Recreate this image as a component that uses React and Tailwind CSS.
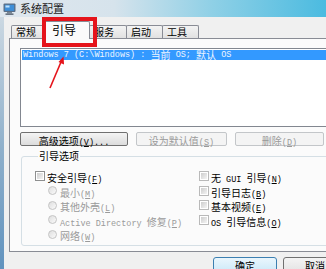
import React from "react";

// 中文与西文分开排版：中文用 Noto CJK，西文用等宽（模拟宋体的半角）
const CJK = /([\u2e80-\u9fff\u3000-\u303f\uff00-\uffef]+)/;

function T({ s }) {
  return s
    .split(CJK)
    .filter(Boolean)
    .map((p, i) =>
      CJK.test(p) ? (
        <span key={i} className="font-['Noto_Sans_CJK_SC',sans-serif] text-[10px]">
          {p}
        </span>
      ) : (
        <span key={i} className="font-['Liberation_Mono',monospace] text-[8.5px] whitespace-pre">
          {p}
        </span>
      )
    );
}

function Lbl({ s, k, tail = "" }) {
  return (
    <span className="leading-none whitespace-nowrap">
      <T s={s} />
      <span className="font-['Liberation_Mono',monospace] text-[8.5px]">
        (<u>{k}</u>){tail}
      </span>
    </span>
  );
}

function Box({ light }) {
  return (
    <span
      className={
        "w-[10px] h-[10px] border p-[1px] bg-white shrink-0 " +
        (light ? "border-[#b9b9b9]" : "border-[#8e8f8f]")
      }
    >
      <span className="block w-full h-full bg-gradient-to-br from-[#cdcdcd] to-[#f4f4f4]" />
    </span>
  );
}

function Radio() {
  return (
    <span className="w-[9px] h-[9px] rounded-full border border-[#c4c4c4] bg-gradient-to-br from-[#dedede] to-[#fbfbfb] shrink-0" />
  );
}

const tabs = [
  { name: "常规", w: "w-[33px]" },
  { name: "引导", w: "w-[46px]", on: true },
  { name: "服务", w: "w-[38px]" },
  { name: "启动", w: "w-[37px]" },
  { name: "工具", w: "w-[37px]" },
];

export default function App() {
  return (
    <div className="w-[326px] h-[269px] overflow-hidden relative bg-[#f0f0f0] flex flex-col text-black">
      {/* 标题栏 */}
      <div className="h-[17px] shrink-0 flex items-center gap-[4px] pl-[3px] bg-[linear-gradient(90deg,#dfe7ee_0%,#d6e3ec_35%,#8fd0e6_65%,#4bbbe0_100%)]">
        <svg width="13" height="12" viewBox="0 0 13 12">
          <rect x="0.5" y="0.5" width="12" height="8.5" rx="1" fill="#5a6e86" />
          <rect x="1.8" y="1.8" width="9.4" height="6" fill="#3f8fd8" />
          <rect x="2.5" y="2.5" width="4" height="2" fill="#bfe4ff" />
          <rect x="4" y="9" width="5" height="1.5" fill="#7b8794" />
          <rect x="2.5" y="10.5" width="8" height="1.3" fill="#4d5968" />
        </svg>
        <span className="font-['Noto_Sans_CJK_SC',sans-serif] text-[11px] leading-none text-[#1b1b1b]">
          系统配置
        </span>
      </div>

      <div className="flex flex-1">
        <div className="w-[4px] shrink-0 bg-gradient-to-b from-[#cbd8e2] via-[#8fb0cb] to-[#5d90bd]" />
        <div className="flex-1 pl-[5px] pt-[5px] flex flex-col">
          {/* 选项卡 */}
          <div className="h-[16px] flex items-end pl-[2px] relative z-10">
            {tabs.map((t) =>
              t.on ? (
                <div
                  key={t.name}
                  className={
                    t.w +
                    " h-[18px] -mb-[1px] border border-b-0 border-[#898c95] bg-[#fbfbfb] rounded-t-[2px] pl-[7px] pt-[2px] font-['Noto_Sans_CJK_SC',sans-serif] text-[12px] leading-none"
                  }
                >
                  {t.name}
                </div>
              ) : (
                <div
                  key={t.name}
                  className={
                    t.w +
                    " h-[13px] border border-b-0 border-[#898c95] -ml-px first:ml-0 bg-gradient-to-b from-[#f3f3f3] to-[#e1e1e1] rounded-t-[2px] pl-[4px] pt-[1px] font-['Noto_Sans_CJK_SC',sans-serif] text-[10px] leading-none"
                  }
                >
                  {t.name}
                </div>
              )
            )}
          </div>

          {/* 选项卡面板 */}
          <div className="w-[340px] h-[214px] shrink-0 border border-[#898c95] bg-[#fbfbfb] pl-[10px] pt-[9px] flex flex-col">
            <div className="h-[79px] border border-[#828790] bg-white p-[1px] pr-0">
              <div className="h-[10px] bg-[#3399ff] text-[#eef6ff] flex items-center pl-[1px] leading-none">
                <T s="Windows 7 (C:\Windows) : 当前 OS; 默认 OS" />
              </div>
            </div>

            <div className="mt-[5px] flex gap-[8px] h-[14px]">
              <div className="w-[108px] border border-[#707070] rounded-[2px] bg-gradient-to-b from-[#f4f4f4] to-[#dcdcdc] flex items-center justify-center">
                <Lbl s="高级选项" k="V" tail="..." />
              </div>
              <div className="w-[91px] border border-[#c3c6c9] rounded-[2px] bg-[#f4f4f4] text-[#9a9a9a] flex items-center justify-center">
                <Lbl s="设为默认值" k="S" />
              </div>
              <div className="w-[89px] border border-[#c3c6c9] rounded-[2px] bg-[#f4f4f4] text-[#9a9a9a] flex items-center justify-center">
                <Lbl s="删除" k="D" />
              </div>
            </div>

            <fieldset className="mt-[5px] ml-[1px] h-[95px] border border-[#d5dfe5] rounded-[3px] pl-[13px] pt-[8px]">
              <legend className="ml-[3px] px-[1px] font-['Noto_Sans_CJK_SC',sans-serif] text-[10px] leading-[10px]">
                引导选项
              </legend>
              <div className="grid grid-cols-[164px_1fr]">
                <div className="flex flex-col">
                  <div className="h-[14.5px] flex items-center gap-[2px]">
                    <Box />
                    <Lbl s="安全引导" k="F" />
                  </div>
                  <div className="h-[14.5px] flex items-center gap-[3px] pl-[13px] text-[#9a9a9a]">
                    <Radio />
                    <Lbl s="最小" k="M" />
                  </div>
                  <div className="h-[14.5px] flex items-center gap-[3px] pl-[13px] text-[#9a9a9a]">
                    <Radio />
                    <Lbl s="其他外壳" k="L" />
                  </div>
                  <div className="h-[14.5px] flex items-center gap-[3px] pl-[13px] text-[#9a9a9a]">
                    <Radio />
                    <Lbl s="Active Directory 修复" k="P" />
                  </div>
                  <div className="h-[14.5px] flex items-center gap-[3px] pl-[13px] text-[#9a9a9a]">
                    <Radio />
                    <Lbl s="网络" k="W" />
                  </div>
                </div>
                <div className="flex flex-col">
                  <div className="h-[14.5px] flex items-center gap-[2px]">
                    <Box light />
                    <Lbl s="无 GUI 引导" k="N" />
                  </div>
                  <div className="h-[14.5px] flex items-center gap-[2px]">
                    <Box light />
                    <Lbl s="引导日志" k="B" />
                  </div>
                  <div className="h-[14.5px] flex items-center gap-[2px]">
                    <Box light />
                    <Lbl s="基本视频" k="E" />
                  </div>
                  <div className="h-[14.5px] flex items-center gap-[2px]">
                    <Box light />
                    <Lbl s="OS 引导信息" k="O" />
                  </div>
                </div>
              </div>
            </fieldset>
          </div>

          {/* 底部按钮 */}
          <div className="mt-[5px] flex gap-[6px] pl-[204px]">
            <div className="w-[64px] h-[22px] shrink-0 border border-[#3c7fb1] rounded-[3px] bg-gradient-to-b from-[#eaf6fd] to-[#bfe3f6] flex justify-center pt-[3px] font-['Noto_Sans_CJK_SC',sans-serif] text-[10px] leading-none">
              确定
            </div>
            <div className="w-[64px] h-[22px] shrink-0 border border-[#707070] rounded-[3px] bg-gradient-to-b from-[#f4f4f4] to-[#dcdcdc] flex justify-center pt-[3px] font-['Noto_Sans_CJK_SC',sans-serif] text-[10px] leading-none">
              取消
            </div>
          </div>
        </div>
      </div>

      {/* 标注：红框与箭头 */}
      <div className="absolute left-[42px] top-[17px] w-[55px] h-[30px] border-[4px] border-[#e5141b] z-20" />
      <svg className="absolute left-0 top-0 z-20" width="326" height="269">
        <line x1="50" y1="88" x2="61" y2="62" stroke="#e5141b" strokeWidth="1.6" />
        <polygon points="63.5,56.5 64,64.5 58.5,62" fill="#e5141b" />
      </svg>
    </div>
  );
}
